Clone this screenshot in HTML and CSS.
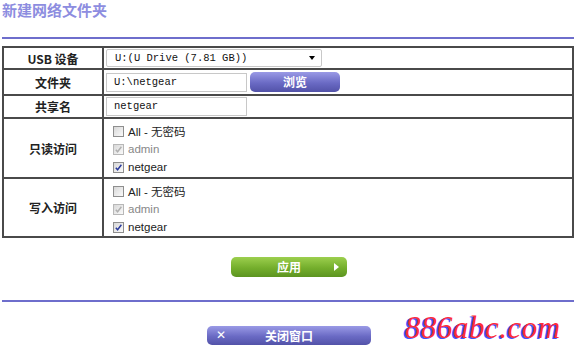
FILE: index.html
```html
<!DOCTYPE html>
<html lang="zh-CN">
<head>
    <meta charset="UTF-8">
    <title>新建网络文件夹</title>
    <link rel="stylesheet" href="styles.css">
</head>
<body>
    <div class="page">
        <h1 class="title">新建网络文件夹</h1>
        <div class="rule"></div>

        <table class="form">
            <tr class="r1">
                <th>USB 设备</th>
                <td>
                    <div class="select">
                        <span>U:(U Drive (7.81 GB))</span>
                        <span class="arrow"></span>
                    </div>
                </td>
            </tr>
            <tr class="r2">
                <th>文件夹</th>
                <td>
                    <div class="line">
                        <div class="input">U:\netgear</div>
                        <button class="btn btn-purple browse">浏览</button>
                    </div>
                </td>
            </tr>
            <tr class="r3">
                <th>共享名</th>
                <td><div class="input">netgear</div></td>
            </tr>
            <tr class="r4">
                <th>只读访问</th>
                <td class="checks">
                    <div class="check"><span class="box"></span>All - 无密码</div>
                    <div class="check off"><span class="box"><svg viewBox="0 0 10 10"><path d="M2 5.2 L4 7.5 L8.2 2"/></svg></span>admin</div>
                    <div class="check"><span class="box"><svg viewBox="0 0 10 10"><path d="M2 5.2 L4 7.5 L8.2 2"/></svg></span>netgear</div>
                </td>
            </tr>
            <tr class="r5">
                <th>写入访问</th>
                <td class="checks">
                    <div class="check"><span class="box"></span>All - 无密码</div>
                    <div class="check off"><span class="box"><svg viewBox="0 0 10 10"><path d="M2 5.2 L4 7.5 L8.2 2"/></svg></span>admin</div>
                    <div class="check"><span class="box"><svg viewBox="0 0 10 10"><path d="M2 5.2 L4 7.5 L8.2 2"/></svg></span>netgear</div>
                </td>
            </tr>
        </table>

        <div class="actions">
            <button class="btn btn-green apply">应用<span class="tri"></span></button>
        </div>

        <div class="rule"></div>

        <div class="actions close-row">
            <button class="btn btn-purple close"><span class="x">✕</span>关闭窗口</button>
        </div>

        <div class="mark">886abc.com</div>
    </div>
</body>
</html>
```

FILE: styles.css
```css
body {
    margin: 0;
    background: #fff;
    font-family: "Liberation Sans", "Noto Sans CJK SC", sans-serif;
    color: #222;
}
.page {
    position: relative;
    width: 572px;
    height: 350px;
    padding: 0 2px;
    overflow: hidden;
}
.title {
    margin: 1px 0 0 0;
    font-family: "Noto Sans CJK SC", sans-serif;
    font-size: 15px;
    line-height: 18px;
    font-weight: bold;
    color: #8d8de0;
}
.rule {
    height: 2px;
    margin-top: 18px;
    background: #6e6ecc;
}
.form {
    width: 572px;
    margin-top: 7px;
    border-collapse: collapse;
    border: 2px solid #444;
}
.form th,
.form td {
    border: 2px solid #4a4a4a;
    padding: 0;
}
.form th {
    width: 98px;
    font-family: "Noto Sans CJK SC", sans-serif;
    font-size: 12px;
    font-weight: bold;
    color: #222;
    text-align: center;
}
.form td {
    padding-left: 2px;
}
.r1 td, .r1 th { height: 20px; }
.r2 td, .r2 th { height: 24px; }
.r3 td, .r3 th { height: 21px; }
.r4 td, .r4 th { height: 58px; }
.r5 td, .r5 th { height: 57px; }

.select {
    position: relative;
    width: 206px;
    height: 16px;
    border: 1px solid #c8c8c8;
    border-radius: 2px;
    padding-left: 8px;
    font-family: "Liberation Mono", monospace;
    font-size: 10.5px;
    line-height: 16px;
    color: #111;
}
.arrow {
    position: absolute;
    right: 6px;
    top: 6px;
    border-left: 3px solid transparent;
    border-right: 3px solid transparent;
    border-top: 4px solid #000;
}
.line {
    display: flex;
    align-items: center;
    gap: 3px;
}
.input {
    width: 132px;
    height: 17px;
    border: 1px solid #c8c8c8;
    padding-left: 7px;
    font-family: "Liberation Mono", monospace;
    font-size: 10.5px;
    line-height: 17px;
    color: #111;
}
.btn {
    border: none;
    padding: 0;
    color: #fff;
    font-family: "Noto Sans CJK SC", sans-serif;
    font-weight: bold;
    font-size: 12px;
    cursor: pointer;
}
.btn-purple {
    background: linear-gradient(#9a9ae6, #6a6ac4 55%, #5252a8);
    border-radius: 5px;
}
.btn-green {
    background: linear-gradient(#9ccf4e, #74ae2c 55%, #5c9420);
    border-radius: 5px;
}
.browse {
    width: 90px;
    height: 20px;
    line-height: 20px;
}
.checks {
    vertical-align: top;
}
.checks .check:first-child {
    margin-top: 3px;
}
.check {
    display: flex;
    align-items: center;
    height: 18px;
    padding-left: 7px;
    font-size: 11.5px;
    color: #222;
}
.check.off {
    color: #888;
}
.box {
    width: 9px;
    height: 9px;
    margin-right: 4px;
    border: 1px solid #8e8e8e;
    background: linear-gradient(135deg, #d8d8d8, #fafafa);
}
.box svg {
    display: block;
    width: 9px;
    height: 9px;
    fill: none;
    stroke: #2a3a9c;
    stroke-width: 1.6;
}
.off .box {
    border-color: #b8b8b8;
}
.off .box svg {
    stroke: #b0b0b0;
}
.actions {
    display: flex;
    justify-content: center;
    margin-top: 19px;
    padding-left: 2px;
}
.actions + .rule {
    margin-top: 23px;
}
.apply {
    position: relative;
    width: 116px;
    height: 20px;
    line-height: 20px;
}
.tri {
    position: absolute;
    right: 8px;
    top: 6px;
    border-top: 4px solid transparent;
    border-bottom: 4px solid transparent;
    border-left: 5px solid #fff;
}
.close-row {
    margin-top: 24px;
}
.close {
    position: relative;
    width: 164px;
    height: 19px;
    line-height: 19px;
}
.x {
    position: absolute;
    left: 9px;
    top: 0;
    font-family: "DejaVu Sans", sans-serif;
    font-size: 12px;
    font-weight: bold;
}
.mark {
    position: absolute;
    left: 405px;
    top: 310px;
    font-family: "Liberation Serif", serif;
    font-style: italic;
    font-size: 31px;
    letter-spacing: 0.5px;
    color: #ff2b3b;
    text-shadow: -2px 1px 0 #4450ff;
}
```
